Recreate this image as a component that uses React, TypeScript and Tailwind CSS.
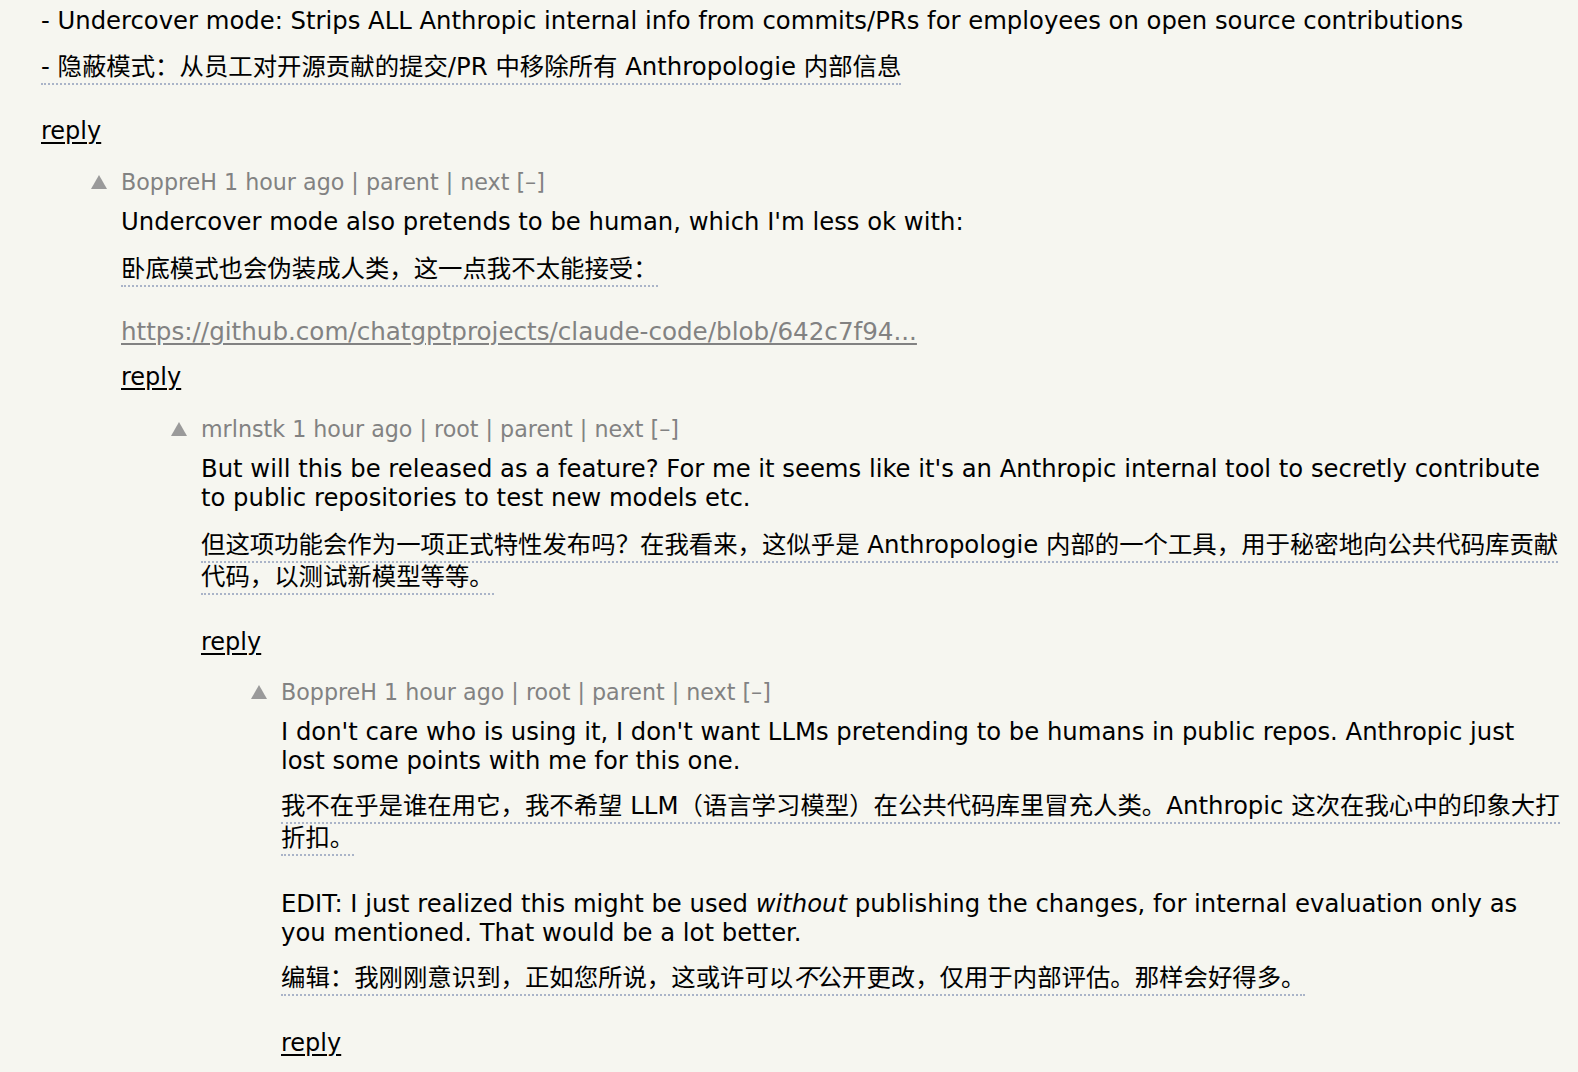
import type { ReactNode } from 'react';

const font = "font-['DejaVu_Sans','Noto_Sans_CJK_SC',sans-serif]";

function Zh({ children, className = 'mt-[16px]' }: { children: ReactNode; className?: string }) {
  return (
    <div className={`text-[24.4px] leading-[32px] ${className}`}>
      <span className="border-b-2 border-dotted border-[#aab4c8] pb-[2px]">{children}</span>
    </div>
  );
}

function En({ children, className = '' }: { children: ReactNode; className?: string }) {
  return <div className={`text-[24.3px] leading-[29px] ${className}`}>{children}</div>;
}

function Reply({ className = '' }: { className?: string }) {
  return (
    <div className={`text-[24px] leading-[29px] ${className}`}>
      <a href="#" className="text-black underline underline-offset-[3px]">reply</a>
    </div>
  );
}

function Meta({ user, root }: { user: string; root?: boolean }) {
  return (
    <div className="relative text-[22.2px] leading-[26px] text-[#828282]">
      <svg
        className="absolute left-[-30px] top-[6px]"
        width="16"
        height="14"
        viewBox="0 0 16 14"
        aria-hidden
      >
        <polygon points="8,0 16,14 0,14" fill="#9a9a9a" />
      </svg>
      {user} 1 hour ago | {root && <>root | </>}parent | next [–]
    </div>
  );
}

function Comment({
  user,
  root,
  className = 'mt-[23px]',
  children,
}: {
  user: string;
  root?: boolean;
  className?: string;
  children: ReactNode;
}) {
  return (
    <div className={`pl-[80px] ${className}`}>
      <Meta user={user} root={root} />
      <div className="mt-[12px]">{children}</div>
    </div>
  );
}

export default function App() {
  return (
    <div className={`min-h-[1072px] bg-[#f6f6f0] pl-[41px] pr-[16px] pt-[6px] text-black ${font}`}>
      <En>- Undercover mode: Strips ALL Anthropic internal info from commits/PRs for employees on open source contributions</En>
      <Zh>- 隐蔽模式：从员工对开源贡献的提交/PR 中移除所有 Anthropologie 内部信息</Zh>
      <Reply className="mt-[34px]" />

      <Comment user="BoppreH" className="mt-[23px]">
        <En>Undercover mode also pretends to be human, which I'm less ok with:</En>
        <Zh className="mt-[17px]">卧底模式也会伪装成人类，这一点我不太能接受：</Zh>
        <En className="mt-[32px]">
          <a href="#" className="text-[24.6px] text-[#828282] underline underline-offset-[3px]">
            https://github.com/chatgptprojects/claude-code/blob/642c7f94...
          </a>
        </En>
        <Reply className="mt-[17px]" />

        <Comment user="mrlnstk" root className="mt-[24px]">
          <En>
            But will this be released as a feature? For me it seems like it's an Anthropic internal tool to secretly
            contribute to public repositories to test new models etc.
          </En>
          <Zh className="mt-[17px]">但这项功能会作为一项正式特性发布吗？在我看来，这似乎是 Anthropologie 内部的一个工具，用于秘密地向公共代码库贡献代码，以测试新模型等等。</Zh>
          <Reply className="mt-[35px]" />

          <Comment user="BoppreH" root className="mt-[22px]">
            <En>
              I don't care who is using it, I don't want LLMs pretending to be humans in public repos. Anthropic just
              lost some points with me for this one.
            </En>
            <Zh className="mt-[15px]">我不在乎是谁在用它，我不希望 LLM（语言学习模型）在公共代码库里冒充人类。Anthropic 这次在我心中的印象大打折扣。</Zh>
            <En className="mt-[35px]">
              EDIT: I just realized this might be used <i>without</i> publishing the changes, for internal evaluation
              only as you mentioned. That would be a lot better.
            </En>
            <Zh className="mt-[15px]">
              编辑：我刚刚意识到，正如您所说，这或许可以<i>不</i>公开更改，仅用于内部评估。那样会好得多。
            </Zh>
            <Reply className="mt-[35px]" />
          </Comment>
        </Comment>
      </Comment>
    </div>
  );
}
